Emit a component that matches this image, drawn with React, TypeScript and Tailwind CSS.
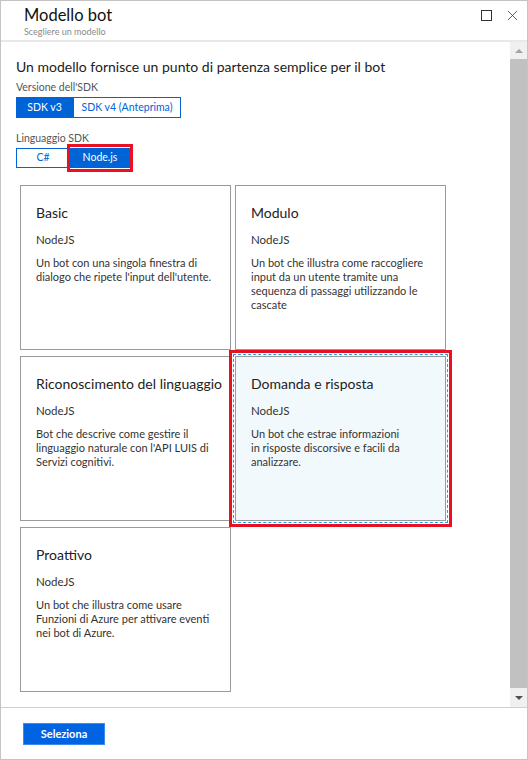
import { X } from 'lucide-react';

const cards = [
  { title: 'Basic', lines: ['Un bot con una singola finestra di', "dialogo che ripete l'input dell'utente."] },
  {
    title: 'Modulo',
    lines: ['Un bot che illustra come raccogliere', 'input da un utente tramite una', 'sequenza di passaggi utilizzando le', 'cascate'],
  },
  {
    title: 'Riconoscimento del linguaggio',
    lines: ['Bot che descrive come gestire il', "linguaggio naturale con l'API LUIS di", 'Servizi cognitivi.'],
  },
  {
    title: 'Domanda e risposta',
    lines: ['Un bot che estrae informazioni', 'in risposte discorsive e facili da', 'analizzare.'],
    selected: true,
  },
  {
    title: 'Proattivo',
    lines: ['Un bot che illustra come usare', 'Funzioni di Azure per attivare eventi', 'nei bot di Azure.'],
  },
];

function Card({ title, lines, selected }: { title: string; lines: string[]; selected?: boolean }) {
  return (
    <div className="relative">
      <div
        className={
          selected
            ? 'h-[165px] border border-[#9a9a9a] bg-[#f2f9fd] outline-1 outline-dashed outline-[#19a3e3] outline-offset-1 pl-[15px] pr-[8px] pt-[18px]'
            : 'h-[165px] border border-[#9a9a9a] bg-white pl-[15px] pr-[8px] pt-[18px]'
        }
      >
        <div className="text-[14px] leading-[18px] text-[#222] whitespace-nowrap">{title}</div>
        <div className="mt-[10px] text-[11.5px] leading-[16px] text-[#333]">NodeJS</div>
        <div className="mt-[8px] text-[11px] leading-[14px] text-[#333]">
          {lines.map((l) => (
            <div key={l} className="whitespace-nowrap">
              {l}
            </div>
          ))}
        </div>
      </div>
      {selected && <div className="absolute -inset-[6px] border-[3px] border-[#e81123]" />}
    </div>
  );
}

export default function App() {
  return (
    <div
      className="w-[528px] h-[760px] border border-[#c4c4c4] bg-white flex flex-col overflow-hidden"
      style={{ fontFamily: 'Lato, "Open Sans", sans-serif' }}
    >
      {/* header */}
      <div className="h-[41px] shrink-0 border-b-2 border-[#e8e8e8] flex items-start justify-between pl-[23px] pr-[6px]">
        <div className="pt-[4px]">
          <div className="text-[16.5px] leading-[20px] text-[#111]">Modello bot</div>
          <div className="text-[9px] leading-[12px] text-[#8a8a8a] mt-[1px]">Scegliere un modello</div>
        </div>
        <div className="flex items-center gap-[12px] pt-[6px]">
          <div className="w-[11px] h-[11px] border border-[#333]" />
          <X size={17} strokeWidth={1.1} className="text-[#333]" />
        </div>
      </div>

      {/* body */}
      <div className="flex-1 flex min-h-0">
        <div className="flex-1 overflow-hidden pl-[15px] pr-[10px] pt-[15px]">
          <div className="text-[14px] leading-[20px] text-[#222]">
            Un modello fornisce un punto di partenza semplice per il bot
          </div>
          <div className="mt-[3px] text-[10.5px] leading-[14px] text-[#555]">Versione dell'SDK</div>
          <div className="mt-[3px] flex">
            <div className="w-[57px] h-[21px] bg-[#0063d6] border border-[#0063d6] text-white text-[10.5px] flex items-center justify-center">
              SDK v3
            </div>
            <div className="w-[108px] h-[21px] border border-[#0063d6] text-[#0063d6] text-[10.5px] flex items-center justify-center whitespace-nowrap">
              SDK v4 (Anteprima)
            </div>
          </div>
          <div className="mt-[13px] text-[10.5px] leading-[14px] text-[#555]">Linguaggio SDK</div>
          <div className="mt-[3px] flex">
            <div className="w-[54px] h-[20px] border border-[#0063d6] text-[#0063d6] text-[10.5px] flex items-center justify-center">
              C#
            </div>
            <div className="relative">
              <div className="w-[60px] h-[20px] bg-[#0063d6] border border-[#0063d6] text-white text-[10.5px] flex items-center justify-center">
                Node.js
              </div>
              <div className="absolute -left-[3px] -right-[3px] -top-[4px] -bottom-[4px] border-[3px] border-[#e81123]" />
            </div>
          </div>

          <div className="mt-[17px] ml-[4px] grid grid-cols-[211px_211px] gap-x-[4px] gap-y-[6px]">
            {cards.map((c) => (
              <Card key={c.title} {...c} />
            ))}
          </div>
        </div>

        {/* scrollbar */}
        <div className="w-[17px] shrink-0 bg-[#f0f0f0] flex flex-col">
          <div className="h-[17px] flex items-center justify-center">
            <div className="w-0 h-0 border-l-[4px] border-r-[4px] border-b-[4px] border-l-transparent border-r-transparent border-b-[#a3a3a3]" />
          </div>
          <div className="flex-1 bg-[#c1c1c1]" />
          <div className="h-[19px] flex items-center justify-center">
            <div className="w-0 h-0 border-l-[4px] border-r-[4px] border-t-[4px] border-l-transparent border-r-transparent border-t-[#505050]" />
          </div>
        </div>
      </div>

      {/* footer */}
      <div className="h-[52px] shrink-0 border-t border-[#d0d0d0] pl-[22px] pt-[15px]">
        <div className="w-[82px] h-[22px] bg-[#0063e1] border border-[#3b8cf0] text-white text-[11px] font-bold flex items-center justify-center">
          Seleziona
        </div>
      </div>
    </div>
  );
}
